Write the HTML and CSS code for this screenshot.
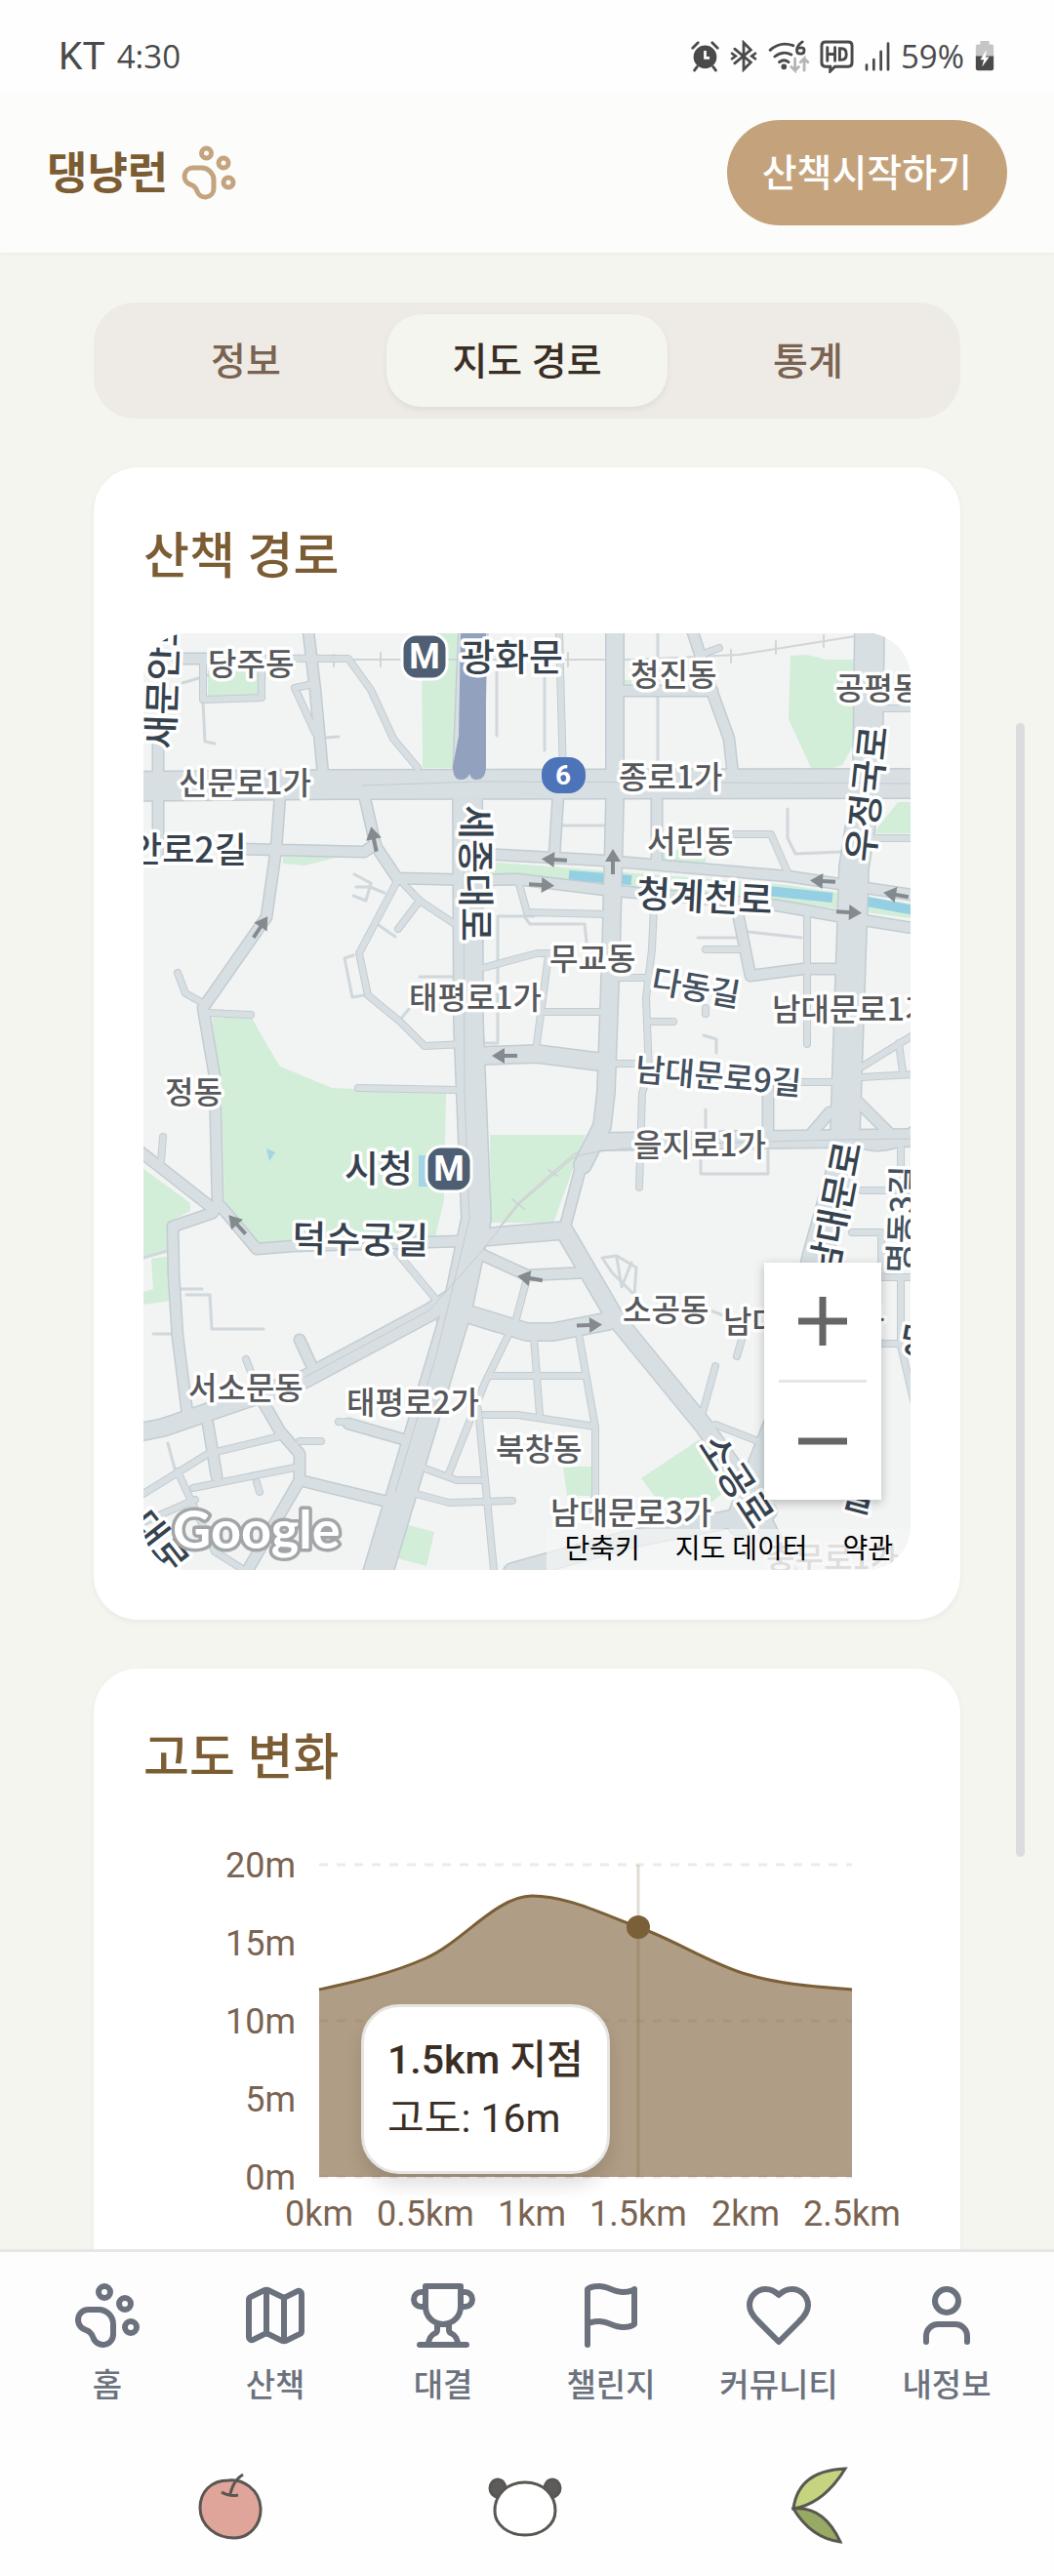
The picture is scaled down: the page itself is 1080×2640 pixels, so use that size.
FILE: index.html
```
<!DOCTYPE html>
<html lang="ko">
<head>
    <meta charset="utf-8">
    <meta name="viewport" content="width=device-width, initial-scale=1">
    <title>댕냥런</title>
    <link rel="stylesheet" href="styles.css">
</head>
<body>
    <div class="status">
        <div class="clock"><span class="carrier">KT</span> <span>4:30</span></div>
        <div class="status-icons">
            <svg width="31" height="33" viewBox="0 0 34 36"><circle cx="17" cy="19" r="13"/><path class="line" d="M3 9l6-6M31 9l-6-6M8 30l-3 4M26 30l3 4"/><path class="cut" d="M17 12v8h5"/></svg>
            <svg width="28" height="33" viewBox="0 0 30 36"><path class="line" d="M5 10l18 15-8 8V3l8 8L5 26M2 15l4 3-4 3M28 15l-4 3 4 3"/></svg>
            <svg width="44" height="34" viewBox="0 0 44 36"><path class="line" d="M2 11q11-10 25-5M7 18q9-7 18-2M12 24q5-4 10 0"/><circle cx="17" cy="29" r="3"/><path class="line" d="M37 2q-6 4-6 9 0 4 4 4t4-4q0-4-7-2"/><path class="line pale" d="M29 20v13l-4-4M29 33l4-4M39 33V20l-4 4M39 20l4 4"/></svg>
            <svg width="35" height="35" viewBox="0 0 36 36"><path class="line" d="M6 3h24q4 0 4 4v18q0 4-4 4H16l-5 5v-5H6q-4 0-4-4V7q0-4 4-4z"/><path class="line" d="M8 9v14M16 9v14M8 16h8M21 10v12h2q5 0 5-6t-5-6z"/></svg>
            <svg width="28" height="33" viewBox="0 0 30 36"><path class="line" d="M3 28v5M11 22v11M19 13v20M27 4v29"/></svg>
            <span>59%</span>
            <svg width="22" height="33" viewBox="0 0 22 36"><path class="cell" d="M6 1h10v4h3q2 0 2 2v12H1V7q0-2 2-2h3z"/><path d="M1 18h20v14q0 2-2 2H3q-2 0-2-2z"/><path class="bolt" d="M13 11L6 22h4l-2 8 8-11h-4z"/></svg>
        </div>
    </div>

    <header class="topbar">
        <a class="logo" href="#"><span>댕냥런</span>
            <svg class="icon" viewBox="0 0 24 24"><circle cx="11" cy="4" r="2"/><circle cx="18" cy="8" r="2"/><circle cx="20" cy="16" r="2"/><path d="M9 10a5 5 0 0 1 5 5v3.5a3.5 3.5 0 0 1-6.84 1.045Q6.52 17.48 4.46 16.84A3.5 3.5 0 0 1 5.5 10Z"/></svg>
        </a>
        <button class="start" type="button">산책시작하기</button>
    </header>

    <main>
        <div class="tabs" role="tablist">
            <button class="tab" type="button" role="tab">정보</button>
            <button class="tab active" type="button" role="tab" aria-selected="true">지도 경로</button>
            <button class="tab" type="button" role="tab">통계</button>
        </div>

        <section class="card">
            <h2>산책 경로</h2>
            <div class="map">
                <svg class="map-canvas" viewBox="0 0 786 960" preserveAspectRatio="xMidYMid slice">
                    <defs>
                        <g id="main">
                            <path d="M-20 157L200 155 800 154M338-10L332 150 333 400 341 600 322 690 238 970M744-10L742 150 728 240 720 480 718 540 690 640 655 800 612 910"/>
                        </g>
                        <g id="major">
                            <path d="M-20 822L20 814 166 764 293 696 325 675M335 620L431 612 483 701 573 811 616 871 665 970M378 962L500 928 640 900M465 521L786 517M483-10L483 170 479 330 474 470 470 505 450 545"/>
                            <path d="M345 433L403 431 474 440M330 697L393 716 420 716 476 705"/>
                        </g>
                        <g id="street">
                            <path d="M168-10L176 58 184 145M15 110V225M140 165L136 221 126 291 61 384 73 454 76 584M100 221L226 224 238 216M226 165L238 218 260 251 345 253 383 252 473 263 650 279 706 289 800 304M345 226L383 228 473 233 660 249 800 270M35 26H66M425 165L421 228M526 165V235M560-10L583 61 600 108 604 145M490 59H583M608 282L622 351 676 344H715M-10 526L73 591M80 588L116 631 153 628 325 623M71 594L30 608 31 658 35 721 45 800M160 724L172 750M118 780L140 818 160 841V868L104 965M66 810L75 864M160 868L250 890M210 810L266 826M450 540L431 612M345 636L393 658 456 655M733 481L766 514M703 491L680 518M640 465V520M725 518Q760 535 790 510"/>
                        </g>
                        <g id="lane">
                            <path d="M40 25L210 26 233 58 256 108 281 138M174 52L155 56 176 102M61 24V68L121 66V38M260 254L221 328 230 371 263 398 288 423 330 421M260 250L283 274 322 300M283 274L261 303M35 348L43 369 61 379M66 389L110 391M220 466L322 468M348 343L403 328H420M426 0L430 145M571 22L590 15M750 77H790M745 210H790M600 206H643L660 245M680 288V421M576 324H612M482 353H520M482 441H515M403 388H470M415 330L402 428M383 250L393 286 476 288M523 280L521 324 515 374 518 451 511 471 508 568M516 398H543M576 384V390M640 460H715M730 448L790 411M735 455L790 452M774 420L778 450M20 516L18 541M260 635L300 683M105 744L123 790M140 823L66 841-10 888M160 854L51 876M35 859L73 941 103 960M-5 913L53 888M116 870L119 880M160 828H182M200 808L215 809M373 721L350 768 313 861M283 854L321 868H350M276 881L313 891 378 889M343 795L360 970M350 801H383L463 813M400 721L406 801M446 718L463 814V884M356 761H450M380 710L392 665M586 751L572 802M613 724L608 741M575 815L586 811 635 830M736 571H790M726 614H756V660H790M776 660V730L790 790M776 520V571M756 728H790M463 884L455 900"/>
                        </g>
                    </defs>
                    <rect class="land" width="786" height="960"/>
                    <path class="park" d="M285 0H321L318 138H286zM66 38H118V63L66 65zM70 394L111 394 126 421 140 444 193 466 310 471 308 581 298 623 120 626 83 584 80 471zM0 549L48 584V592L25 604 27 634 0 640zM8 641L28 638V684L0 688V675L10 672zM355 514H453L420 604H356zM663 23L680 22 700 27H735L731 108 716 135 700 140H685L661 88zM773 173H786V205H748zM530 222H576V238H530zM143 229L200 229 165 238 143 236zM271 914L298 921 290 956 260 948zM430 854H462L460 884H434zM510 866L570 826 605 871 583 890 530 893zM350 234L660 258 786 277V292L650 274 350 247zM486 48H500V60H486z"/>
                    <path class="water" d="M436 248L500 253M640 264L706 271M742 275L790 284"/>
                    <path class="pond" d="M126 528l9 4-6 9zM282 535h12v32h-12z"/>
                    <path class="thin" d="M40 51L66 43M61 71L63 111 73 113M186 107L200 106M362 20V105M411 40V120M216 247L233 256 228 274 215 269M218 260H232L247 266M238 297L258 311M215 330L206 333 214 373 226 371M283 352H320M263 396L272 385M363 290H400M363 290V420H350M428 197H474M660 180V210L668 226 715 224M568 312H610M620 306L674 312M574 412L587 416V430M571 540V554H640V530M576 488V520M30 672H60M44 678H68L70 713H123M10 718H30M25 830L33 860M0 640L28 632M470 640L485 638 505 650 503 678 480 655zM485 640L490 670 500 645M527 0V140M390 290L396 298H452L455 325M570 690L610 705"/>
                    <path class="rail" d="M40 22L170 27 500 27 610 22 786-6M195 22V34M243 20V34M435 20V34M602 17V30M648 8V21M697 2V14M300 705L345 635 383 585 440 535Q460 522 500 524M378 580L390 590M415 550L424 556M235 154L310 151M395 154H786"/>
                    <g class="edge">
                        <use href="#lane" stroke-width="8"/>
                        <use href="#street" stroke-width="13"/>
                        <use href="#major" stroke-width="20"/>
                        <use href="#main" stroke-width="32"/>
                    </g>
                    <g class="road">
                        <use href="#lane" stroke-width="6"/>
                        <use href="#street" stroke-width="10"/>
                        <use href="#major" stroke-width="17"/>
                        <use href="#main" stroke-width="29"/>
                    </g>
                    <path class="seam" d="M225 156L345 152 786 154M328 240L329 470 334 600 300 740 258 880M166 762L293 694 345 635 385 585 440 538Q465 522 786 518"/>
                    <path class="tunnel" d="M325 0H351V136Q351 150 341 150 336 150 334 144 332 150 325 150 317 150 317 136L323 105z"/>
                    <g class="arrow">
                        <path d="M0-13l8 13H2v13h-4V0h-6z" transform="translate(236 211) rotate(-12)"/>
                        <path d="M0-13l8 13H2v13h-4V0h-6z" transform="translate(120 301) rotate(34)"/>
                        <path d="M0-13l8 13H2v13h-4V0h-6z" transform="translate(370 433) rotate(-90)"/>
                        <path d="M0-13l8 13H2v13h-4V0h-6z" transform="translate(421 232) rotate(-87)"/>
                        <path d="M0-13l8 13H2v13h-4V0h-6z" transform="translate(481 234)"/>
                        <path d="M0-13l8 13H2v13h-4V0h-6z" transform="translate(408 258) rotate(93)"/>
                        <path d="M0-13l8 13H2v13h-4V0h-6z" transform="translate(696 254) rotate(-87)"/>
                        <path d="M0-13l8 13H2v13h-4V0h-6z" transform="translate(771 268) rotate(-80)"/>
                        <path d="M0-13l8 13H2v13h-4V0h-6z" transform="translate(723 286) rotate(93)"/>
                        <path d="M0-13l8 13H2v13h-4V0h-6z" transform="translate(96 606) rotate(-42)"/>
                        <path d="M0-13l8 13H2v13h-4V0h-6z" transform="translate(396 661) rotate(-80)"/>
                        <path d="M0-13l8 13H2v13h-4V0h-6z" transform="translate(457 709) rotate(88)"/>
                    </g>
                    <g class="area">
                        <text x="66" y="43">당주동</text>
                        <text x="499" y="54">청진동</text>
                        <text x="709" y="68">공평동</text>
                        <text x="36" y="165">신문로1가</text>
                        <text x="487" y="159">종로1가</text>
                        <text x="516" y="225">서린동</text>
                        <text x="416" y="345">무교동</text>
                        <text x="272" y="385">태평로1가</text>
                        <text x="644" y="397">남대문로1가</text>
                        <text x="22" y="482">정동</text>
                        <text x="502" y="536">을지로1가</text>
                        <text x="491" y="705">소공동</text>
                        <text x="594" y="717">남대문로2가</text>
                        <text x="46" y="785">서소문동</text>
                        <text x="208" y="800">태평로2가</text>
                        <text x="361" y="848">북창동</text>
                        <text x="417" y="913">남대문로3가</text>
                        <text class="faint" x="638" y="959">충무로1가</text>
                    </g>
                    <g class="street-name">
                        <text x="106" y="235" text-anchor="end">안로2길</text>
                        <text class="mid" x="325" y="38">광화문</text>
                        <text class="mid" x="206" y="562">시청</text>
                        <text class="mid" transform="translate(31 119) rotate(-88)">새문안로</text>
                        <text class="mid" transform="translate(327 246) rotate(90)" text-anchor="middle">세종대로</text>
                        <text class="mid" transform="translate(755 166) rotate(-84)" text-anchor="middle">우정국로</text>
                        <text class="mid" transform="translate(574 284) rotate(3)" text-anchor="middle">청계천로</text>
                        <text class="mid" transform="translate(222 635) rotate(1)" text-anchor="middle">덕수궁길</text>
                        <text class="mid" transform="translate(736 524) rotate(-79)" text-anchor="end">남대문로</text>
                        <text class="mid" transform="translate(596 876) rotate(57)" text-anchor="middle">소공로</text>
                        <text class="mid" transform="translate(6 940) rotate(52)" text-anchor="middle">대로</text>
                        <text class="mid" transform="translate(712 893) rotate(15)">길</text>
                        <text transform="translate(773 735) rotate(10)">명동</text>
                    </g>
                    <g class="alley">
                        <text transform="translate(564 375) rotate(10)" text-anchor="middle">다동길</text>
                        <text transform="translate(588 466) rotate(5)" text-anchor="middle">남대문로9길</text>
                        <text transform="translate(787 656) rotate(-88)">명동3길</text>
                    </g>
                    <g class="metro">
                        <rect x="265" y="1" width="46" height="46" rx="15"/>
                        <text x="288" y="36" text-anchor="middle">M</text>
                        <rect x="290" y="526" width="46" height="46" rx="15"/>
                        <text x="313" y="561" text-anchor="middle">M</text>
                    </g>
                    <g class="route">
                        <rect x="408" y="127" width="45" height="37" rx="17"/>
                        <text x="430" y="155" text-anchor="middle">6</text>
                    </g>
                    <text class="google" x="30" y="938">Google</text>
                </svg>
                <div class="zoom">
                    <button type="button" aria-label="확대"><svg width="50" height="50" viewBox="0 0 50 50"><path d="M25 0v50M0 25h50"/></svg></button>
                    <button type="button" aria-label="축소"><svg width="50" height="50" viewBox="0 0 50 50"><path d="M0 25h50"/></svg></button>
                </div>
                <div class="terms">
                    <button type="button">단축키</button>
                    <span>지도 데이터</span>
                    <a href="#">약관</a>
                </div>
            </div>
        </section>

        <section class="card">
            <h2>고도 변화</h2>
            <div class="chart">
                <svg viewBox="0 0 786 458">
                    <path class="grid" d="M180 31H726M180 191H726M180 351H726"/>
                    <g transform="translate(180 31)">
                        <path class="fill" d="M0 128C36 120 73 112 109 96 146 80 182 32 218 32 255 32 291 51 327 64 364 77 400 101 437 112 473 123 510 125 546 128V320H0z"/>
                        <path class="curve" d="M0 128C36 120 73 112 109 96 146 80 182 32 218 32 255 32 291 51 327 64 364 77 400 101 437 112 473 123 510 125 546 128"/>
                        <path class="cursor" d="M327 0V320"/>
                        <circle cx="327" cy="64" r="12"/>
                    </g>
                    <g text-anchor="end">
                        <text x="156" y="44">20m</text>
                        <text x="156" y="124">15m</text>
                        <text x="156" y="204">10m</text>
                        <text x="156" y="284">5m</text>
                        <text x="156" y="364">0m</text>
                    </g>
                    <g text-anchor="middle">
                        <text x="180" y="401">0km</text>
                        <text x="289" y="401">0.5km</text>
                        <text x="398" y="401">1km</text>
                        <text x="507" y="401">1.5km</text>
                        <text x="617" y="401">2km</text>
                        <text x="726" y="401">2.5km</text>
                    </g>
                </svg>
                <div class="tooltip">
                    <strong>1.5km 지점</strong>
                    <span>고도: 16m</span>
                </div>
            </div>
        </section>
        <div class="scrollbar"></div>
    </main>

    <nav>
        <a href="#"><svg class="icon" viewBox="0 0 24 24"><circle cx="11" cy="4" r="2"/><circle cx="18" cy="8" r="2"/><circle cx="20" cy="16" r="2"/><path d="M9 10a5 5 0 0 1 5 5v3.5a3.5 3.5 0 0 1-6.84 1.045Q6.52 17.48 4.46 16.84A3.5 3.5 0 0 1 5.5 10Z"/></svg>홈</a>
        <a href="#"><svg class="icon" viewBox="0 0 24 24"><path d="M14.106 5.553a2 2 0 0 0 1.788 0l3.659-1.83A1 1 0 0 1 21 4.619v12.764a1 1 0 0 1-.553.894l-4.553 2.277a2 2 0 0 1-1.788 0l-4.212-2.106a2 2 0 0 0-1.788 0l-3.659 1.83A1 1 0 0 1 3 19.381V6.618a1 1 0 0 1 .553-.894l4.553-2.277a2 2 0 0 1 1.788 0zM15 5.764v15M9 3.236v15"/></svg>산책</a>
        <a href="#"><svg class="icon" viewBox="0 0 24 24"><path d="M6 9H4.5a2.5 2.5 0 0 1 0-5H6M18 9h1.5a2.5 2.5 0 0 0 0-5H18M4 22h16M10 14.66V17c0 .55-.47.98-.97 1.21C7.85 18.75 7 20.24 7 22M14 14.66V17c0 .55.47.98.97 1.21C16.15 18.75 17 20.24 17 22M18 2H6v7a6 6 0 0 0 12 0V2Z"/></svg>대결</a>
        <a href="#"><svg class="icon" viewBox="0 0 24 24"><path d="M4 15s1-1 4-1 5 2 8 2 4-1 4-1V3s-1 1-4 1-5-2-8-2-4 1-4 1zM4 22v-7"/></svg>챌린지</a>
        <a href="#"><svg class="icon" viewBox="0 0 24 24"><path d="M19 14c1.49-1.46 3-3.21 3-5.5A5.5 5.5 0 0 0 16.5 3c-1.76 0-3 .5-4.5 2-1.5-1.5-2.74-2-4.5-2A5.5 5.5 0 0 0 2 8.5c0 2.3 1.5 4.05 3 5.5l7 7Z"/></svg>커뮤니티</a>
        <a href="#"><svg class="icon" viewBox="0 0 24 24"><path d="M19 21v-2a4 4 0 0 0-4-4H9a4 4 0 0 0-4 4v2"/><circle cx="12" cy="7" r="4"/></svg>내정보</a>
    </nav>

    <div class="system">
        <button type="button" aria-label="최근 앱"><svg width="80" height="90" viewBox="0 0 80 90"><path class="apple" d="M38 19C52 17 70 28 71 47 72 65 59 78 44 78 26 78 9 66 9 47 9 31 20 19 38 19z"/><path class="stem" d="M53 13Q43 19 40 33M31 31Q39 36 48 34"/></svg></button>
        <button type="button" aria-label="홈"><svg width="80" height="90" viewBox="0 0 80 90"><ellipse class="ear" cx="12" cy="27" rx="8" ry="9"/><ellipse class="ear" cx="68" cy="27" rx="8" ry="9"/><path class="face" d="M40 21C58 21 71 33 71 50 71 65 57 75 40 75 23 75 9 65 9 50 9 33 22 21 40 21z"/></svg></button>
        <button type="button" aria-label="뒤로"><svg width="80" height="90" viewBox="0 0 80 90"><path class="leaf" d="M13 48Q18 9 66 7 44 43 13 48z"/><path class="leaf dark" d="M13 48Q44 45 61 82 31 78 13 48z"/></svg></button>
    </div>
</body>
</html>
```
FILE: styles.css
```
* {
    box-sizing: border-box;
}

body {
    margin: 0;
    height: 100vh;
    display: flex;
    flex-direction: column;
    overflow: hidden;
    background: #f4f5ef;
    color: #3a2e24;
    font-family: Roboto, "Noto Sans CJK KR", sans-serif;
}

button {
    border: 0;
    padding: 0;
    background: none;
    color: inherit;
    font: inherit;
}

a {
    color: inherit;
    text-decoration: none;
}

.icon {
    fill: none;
    stroke: currentColor;
    stroke-width: 2;
    stroke-linecap: round;
    stroke-linejoin: round;
}

/* status bar */
.status {
    display: flex;
    justify-content: space-between;
    align-items: center;
    height: 95px;
    padding: 20px 60px 0;
    background: #fefefe;
    color: #4a4a4a;
    font-family: "Open Sans", sans-serif;
    font-size: 33px;
}

.clock {
    display: flex;
    align-items: center;
    gap: 12px;
    line-height: 48px;
}

.carrier {
    font-family: Roboto, sans-serif;
    font-size: 39px;
}

.status-icons {
    display: flex;
    align-items: center;
    gap: 10px;
}

.status-icons svg {
    fill: #4a4a4a;
}

.status-icons .line {
    fill: none;
    stroke: #4a4a4a;
    stroke-width: 3;
    stroke-linecap: round;
}

.status-icons .pale {
    stroke: #b5b5b5;
}

.status-icons .cut {
    fill: none;
    stroke: #fff;
    stroke-width: 3;
}

.status-icons .cell {
    fill: #c6c6c6;
}

.status-icons .bolt {
    fill: #fff;
}

/* header */
.topbar {
    display: flex;
    justify-content: space-between;
    align-items: center;
    height: 164px;
    padding: 0 48px;
    background: #fcfdfa;
    box-shadow: 0 2px 4px rgba(0, 0, 0, 0.03);
}

.logo {
    display: flex;
    align-items: center;
    gap: 12px;
    color: #7b5c33;
    font-size: 45px;
    font-weight: 700;
}

.logo span {
    padding-bottom: 6px;
}

.logo .icon {
    width: 60px;
    height: 60px;
    color: #c4a47e;
}

.start {
    height: 108px;
    padding: 0 36px 6px;
    border-radius: 54px;
    background: #c4a37c;
    color: #fff;
    font-size: 39px;
    font-weight: 500;
}

/* content */
main {
    position: relative;
    flex: 1;
    min-height: 0;
    display: flex;
    flex-direction: column;
    gap: 50px;
    padding: 51px 96px 0;
    overflow: hidden;
}

.tabs {
    display: grid;
    grid-template-columns: repeat(3, 1fr);
    flex: none;
    height: 119px;
    padding: 12px;
    border-radius: 42px;
    background: #eeebe6;
}

.tab {
    padding-bottom: 6px;
    border-radius: 36px;
    color: #7a6351;
    font-size: 39px;
    font-weight: 500;
}

.tab.active {
    background: #f4f5ef;
    color: #3a2e24;
    box-shadow: 0 3px 6px rgba(0, 0, 0, 0.06);
}

.card {
    flex: none;
    padding: 51px;
    border-radius: 45px;
    background: #fff;
    box-shadow: 0 2px 6px rgba(0, 0, 0, 0.05);
}

h2 {
    margin: 0 0 37px;
    color: #7b5c33;
    font-size: 51px;
    font-weight: 500;
    line-height: 82px;
}

/* map */
.map {
    position: relative;
    height: 960px;
    border-radius: 45px;
    overflow: hidden;
}

.map-canvas {
    display: block;
    width: 100%;
    height: 100%;
    font-family: "Noto Sans CJK KR", sans-serif;
    font-weight: 500;
    stroke-linecap: round;
    stroke-linejoin: round;
}

.land {
    fill: #f2f3f3;
}

.park {
    fill: #d2edd8;
}

.pond {
    fill: #a3d5e6;
}

.water,
.thin,
.rail,
.seam,
.edge,
.road {
    fill: none;
}

.water {
    stroke: #94cfe3;
    stroke-width: 10;
    stroke-linecap: butt;
}

.thin {
    stroke: #d0d8dc;
    stroke-width: 3;
}

.rail {
    stroke: #d2d5d6;
    stroke-width: 2;
}

.seam {
    stroke: #c3ccd1;
    stroke-width: 1;
}

.edge {
    stroke: #c2ccd1;
}

.road {
    stroke: #d8dfe3;
}

.tunnel {
    fill: #91a1be;
}

.arrow {
    fill: #858a8e;
}

.map-canvas text {
    paint-order: stroke;
    stroke: #fff;
    stroke-width: 7;
}

.area {
    fill: #56585b;
    font-size: 32px;
}

.faint {
    fill: #a4a5a6;
}

.street-name {
    fill: #36434f;
    font-size: 36px;
}

.mid {
    font-size: 38px;
}

.alley {
    fill: #435160;
    font-size: 33px;
}

.metro rect {
    fill: #4f5f73;
    stroke: #fff;
    stroke-width: 3;
}

.map-canvas .metro text,
.map-canvas .route text {
    fill: #fff;
    stroke: none;
    font-family: Roboto, sans-serif;
    font-size: 36px;
    font-weight: 700;
}

.route rect {
    fill: #4d73b9;
}

.map-canvas .route text {
    font-size: 28px;
}

.map-canvas .google {
    fill: #fff;
    stroke: #a2a6a8;
    stroke-width: 7;
    font-family: Lato, sans-serif;
    font-size: 54px;
    font-weight: 700;
}

.zoom {
    position: absolute;
    right: 30px;
    bottom: 72px;
    width: 120px;
    background: #fff;
    box-shadow: 0 3px 10px rgba(0, 0, 0, 0.25);
}

.zoom button {
    display: grid;
    place-items: center;
    width: 100%;
    height: 120px;
}

.zoom button + button::before {
    content: "";
    width: 90px;
    height: 3px;
    background: #e6e6e6;
}

.zoom button + button {
    grid-template-rows: 3px 1fr;
    height: 123px;
}

.zoom svg {
    fill: none;
    stroke: #666;
    stroke-width: 7;
}

.terms {
    position: absolute;
    right: 0;
    bottom: 0;
    display: flex;
    gap: 36px;
    padding: 0 18px;
    background: rgba(245, 245, 245, 0.7);
    color: #000;
    font-size: 28px;
    line-height: 42px;
}

/* altitude chart */
.chart {
    position: relative;
}

.chart svg {
    display: block;
    width: 100%;
    fill: #7a6351;
    font-size: 36px;
}

.chart .grid {
    stroke: #eeebe6;
    stroke-width: 3;
    stroke-dasharray: 9 9;
}

.chart .fill {
    fill: #7b5c33;
    fill-opacity: 0.6;
}

.chart .curve {
    fill: none;
    stroke: #7b5f37;
    stroke-width: 3;
}

.chart .cursor {
    stroke: #7b5c33;
    stroke-opacity: 0.22;
    stroke-width: 3;
}

.chart circle {
    fill: #7b5f37;
}

.tooltip {
    position: absolute;
    left: 223px;
    top: 174px;
    display: flex;
    flex-direction: column;
    padding: 24px;
    border: 3px solid #e5e5e3;
    border-radius: 39px;
    background: #fff;
    box-shadow: 0 12px 18px rgba(0, 0, 0, 0.12);
    font-size: 41px;
    line-height: 60px;
}

.tooltip strong {
    font-weight: 500;
}

.scrollbar {
    position: absolute;
    right: 30px;
    top: 482px;
    width: 9px;
    height: 1162px;
    border-radius: 5px;
    background: #dcdcde;
}

/* bottom navigation */
nav {
    display: grid;
    grid-template-columns: repeat(6, 1fr);
    height: 197px;
    padding: 29px 24px 0;
    border-top: 3px solid #e5e7e7;
    background: #fdfdfd;
    color: #6b727d;
    font-size: 33px;
    font-weight: 500;
}

nav a {
    display: flex;
    flex-direction: column;
    align-items: center;
    gap: 12px;
    line-height: 48px;
}

nav .icon {
    width: 72px;
    height: 72px;
}

.system {
    display: grid;
    grid-template-columns: repeat(3, 302px);
    justify-content: center;
    height: 138px;
    padding: 0 5px 6px 0;
    background: #fefefe;
}

.system svg {
    display: block;
    margin: 0 auto;
    stroke: #5a5752;
    stroke-width: 3;
}

.apple {
    fill: #e0a59a;
}

.stem {
    fill: none;
}

.ear {
    fill: #5c5c5c;
}

.face {
    fill: #fff;
}

.leaf {
    fill: #c5d57f;
}

.dark {
    fill: #98a964;
}
```
